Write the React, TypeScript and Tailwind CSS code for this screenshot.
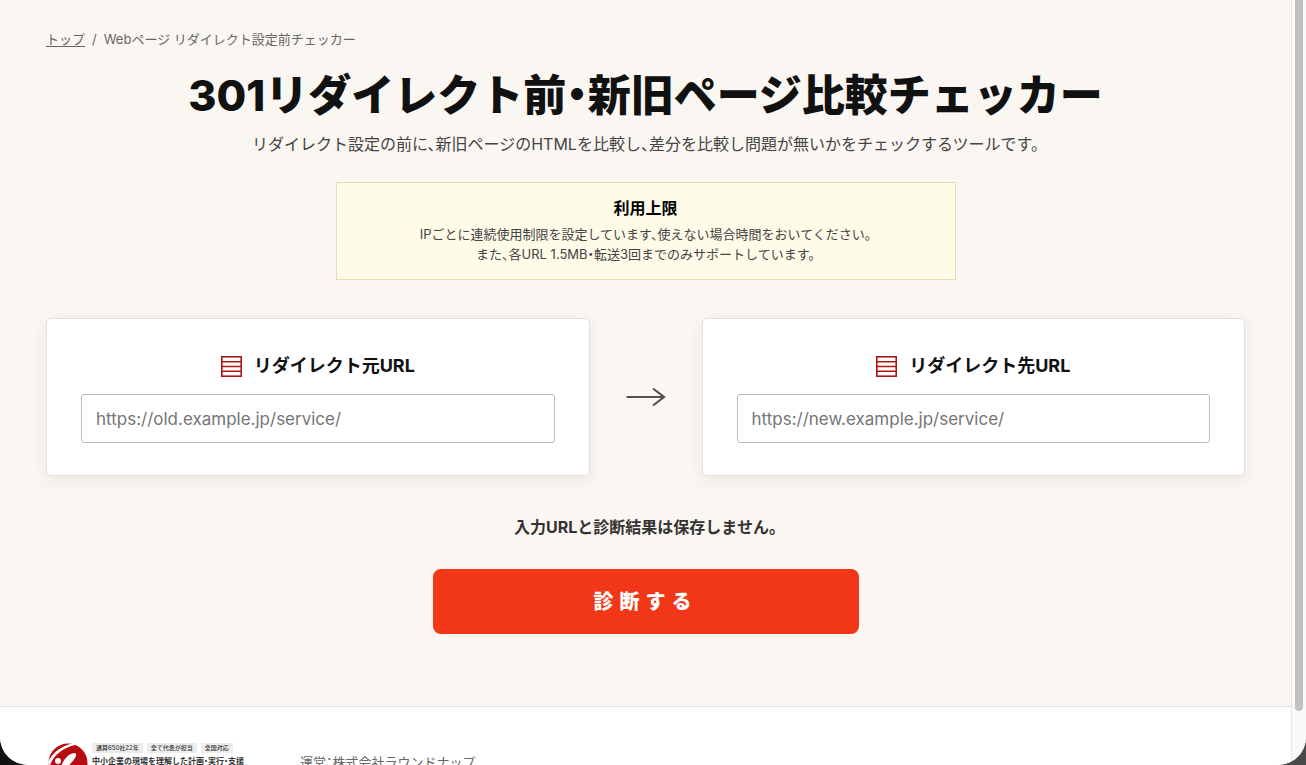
import { useId } from "react";

const LogoMark = () => (
  <svg viewBox="0 0 40 40" className="size-10 shrink-0" aria-hidden="true">
    <circle cx="20" cy="20" r="19.5" fill="#b80c10" />
    <path d="M0 19C5 9 13 3.500 25 0L29 1.500C18 4 9 9 4 18L1 24Z" fill="#fff" />
    <circle cx="10" cy="18" r="3" fill="#fff" />
    <path d="M13 24C15 17 20 11 26 10C30 10 28 15 24 19C21 22 19 25 18 29L12 29Z" fill="#fff" />
  </svg>
);

const SheetIcon = () => (
  <svg viewBox="0 0 21 21" className="size-[21px] shrink-0" fill="none" stroke="#ad1616" strokeWidth="1.6" aria-hidden="true">
    <rect x="0.8" y="0.8" width="19.4" height="19.4" />
    <path d="M1 5.7H20M1 10.500H20M1 15.300H20" />
  </svg>
);

const ArrowIcon = () => (
  <svg viewBox="0 0 40 20" className="h-5 w-10" fill="none" stroke="#555052" strokeWidth="2.2" aria-hidden="true">
    <path d="M0.500 10H38M27 1.500L38 10L27 18.500" />
  </svg>
);

interface UrlCardProps {
  label: string;
  placeholder: string;
}

function UrlCard({ label, placeholder }: UrlCardProps) {
  const id = useId();

  return (
    <div className="rounded-[5px] border border-[#e4dfdf] bg-white px-[34px] py-8 shadow-[0_4px_16px_rgba(60,40,40,0.08)]">
      <label htmlFor={id} className="flex items-center justify-center gap-3 text-[18px] leading-[30px] font-bold text-[#111]">
        <SheetIcon />
        {label}
      </label>
      <input
        id={id}
        type="url"
        placeholder={placeholder}
        className="mt-[13px] h-[49px] w-full rounded-[3px] border border-[#bbb] bg-white px-3.5 text-[17px] text-[#222] outline-none placeholder:text-[#757575] focus:border-[#ad1616]"
      />
    </div>
  );
}

const badges = ["通算650社22年", "全て代表が担当", "全国対応"];

export default function App() {
  return (
    <div className="h-screen overflow-hidden bg-linear-to-r from-[#111] to-[#4a4a4a] font-['Inter','Noto_Sans_CJK_JP',sans-serif] [font-feature-settings:'halt']">
      <div className="flex h-full overflow-hidden rounded-b-[28px] bg-white">
        <div className="min-w-0 flex-1 overflow-hidden">
          <main className="border-b border-[#e5dfdc] bg-[#faf6f1] px-[46px] pt-[29px] pb-[72px]">
            <nav aria-label="パンくず" className="flex gap-[7px] text-[13px] leading-5 text-[#666]">
              <a href="#top" className="underline underline-offset-2">トップ</a>
              <span>/</span>
              <span>Webページ リダイレクト設定前チェッカー</span>
            </nav>

            <h1 className="mt-[17px] text-center text-[43px] leading-[58px] font-extrabold text-[#111]">
              301リダイレクト前・新旧ページ比較チェッカー
            </h1>
            <p className="mt-2 text-center text-base leading-6 text-[#444]">
              リダイレクト設定の前に、新旧ページのHTMLを比較し、差分を比較し問題が無いかをチェックするツールです。
            </p>

            <section className="mx-auto mt-[26px] max-w-[620px] border border-[#e6dcb0] bg-[#fffbe9] px-4 pt-[11px] pb-[15px] text-center">
              <h2 className="text-base leading-7 font-bold text-black">利用上限</h2>
              <p className="mt-0.5 text-[13px] leading-5 text-[#444]">
                IPごとに連続使用制限を設定しています、使えない場合時間をおいてください。
                <br />
                また、各URL 1.5MB・転送3回までのみサポートしています。
              </p>
            </section>

            <form className="mt-[38px]" onSubmit={(e) => e.preventDefault()}>
              <div className="grid grid-cols-[1fr_56px_1fr] items-center gap-7">
                <UrlCard label="リダイレクト元URL" placeholder="https://old.example.jp/service/" />
                <div className="flex justify-center">
                  <ArrowIcon />
                </div>
                <UrlCard label="リダイレクト先URL" placeholder="https://new.example.jp/service/" />
              </div>
              <p className="mt-[37px] text-center text-base leading-7 font-bold text-[#333]">
                入力URLと診断結果は保存しません。
              </p>
              <button
                type="submit"
                className="mx-auto mt-7 block h-[65px] w-full max-w-[426px] rounded-lg bg-[#f23618] text-xl font-black tracking-[6px] text-white"
              >
                診断する
              </button>
            </form>
          </main>

          <footer className="flex gap-14 bg-white px-12 pt-9">
            <div className="flex gap-1">
              <LogoMark />
              <div>
                <ul className="flex gap-1 text-[6px] leading-[10px] font-medium text-[#333]">
                  {badges.map((badge) => (
                    <li key={badge} className="bg-[#ececec] px-1">{badge}</li>
                  ))}
                </ul>
                <p className="mt-0.5 text-[8px] leading-3 font-bold text-[#333]">
                  中小企業の現場を理解した計画・実行・支援
                </p>
              </div>
            </div>
            <p className="mt-[7px] text-[13px] leading-6 text-[#666]">運営：株式会社ラウンドナップ</p>
          </footer>
        </div>

        <div className="w-[15px] shrink-0 border-l border-[#e8e8e8] bg-[#fafafa] px-[3px]">
          <div className="h-[93%] w-2 rounded-b-full bg-[#c1c1c1]" />
        </div>
      </div>
    </div>
  );
}
